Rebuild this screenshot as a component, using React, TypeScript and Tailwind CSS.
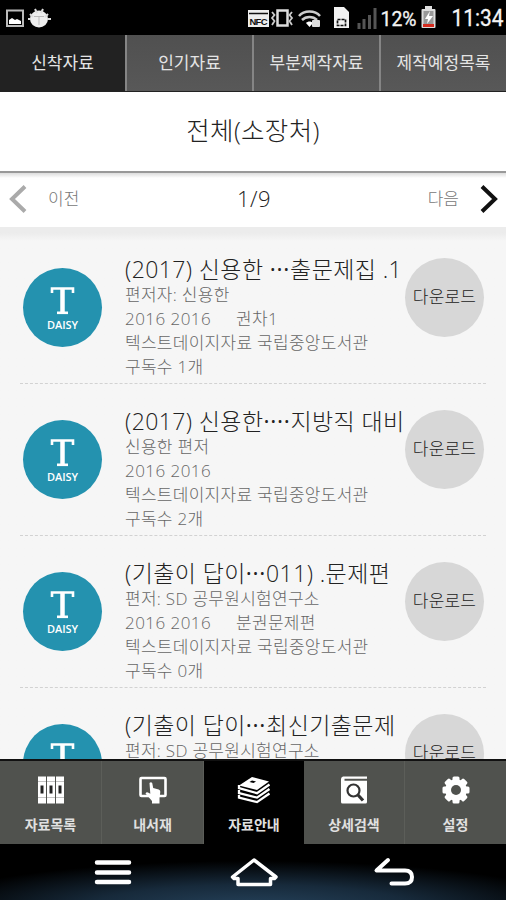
import type { ReactNode } from "react";

const FONT = "font-['Open_Sans','Noto_Sans_CJK_KR',sans-serif]";
const KFONT = "font-['Noto_Sans_CJK_KR',sans-serif]";

type Item = { title: ReactNode; author: string; year: string; vol?: string; count: number };

const dots = (n: number) => <span className="font-normal tracking-[0.700px]">{"·".repeat(n)}</span>;

const items: Item[] = [
  { title: <>(2017) 신용한 {dots(3)}출문제집 .1</>, author: "편저자: 신용한", year: "2016 2016", vol: "권차1", count: 1 },
  { title: <>(2017) 신용한{dots(4)}지방직 대비</>, author: "신용한 편저", year: "2016 2016", count: 2 },
  { title: <>(기출이 답이{dots(3)}011) .문제편</>, author: "편저: SD 공무원시험연구소", year: "2016 2016", vol: "분권문제편", count: 0 },
  { title: <>(기출이 답이{dots(3)}최신기출문제</>, author: "편저: SD 공무원시험연구소", year: "2016 2016", count: 0 },
];

function StatusBar() {
  return (
    <header className="h-[35px] shrink-0 bg-black">
      <svg width="506" height="35" viewBox="0 0 506 35" fill="none">
        <rect x="7" y="10.500" width="16" height="15.500" stroke="#bbb" strokeWidth="2" />
        <path d="M9 24v-4l3-2 3 2 2-1 4 2v3z" fill="#fff" />
        <ellipse cx="39" cy="19" rx="9" ry="8.500" fill="#eee" />
        <path d="M35 9l2 4M43 9l-2 4M28 19h3M48 19h3M30 14l3 3M48 14l-3 3" stroke="#ddd" strokeWidth="2" />
        <path d="M34 16.500h10M39 17v8" stroke="#bbb" strokeWidth="1" />
        <rect x="248" y="10" width="21" height="17" fill="#eee" />
        <path d="M249 13.500h19" stroke="#111" strokeWidth="1.500" />
        <text x="249.500" y="25" fontSize="9.500" fontWeight="900" fontFamily="Liberation Sans" fill="#111" textLength="18">NFC</text>
        <rect x="277.500" y="10.500" width="10" height="15" stroke="#ddd" strokeWidth="2.500" />
        <path d="M272 12l2.500 3-2.500 3 2.500 3-2.500 4M292 12l-2.500 3 2.500 3-2.500 3 2.500 4" stroke="#ccc" strokeWidth="1.800" />
        <path d="M299 16c5-6 16-6 21 0M302 20c4-4 11-4 15 0" stroke="#ccc" strokeWidth="2.500" />
        <path d="M306 23c2-2 5-2 7 0l-3.500 4z" fill="#fff" />
        <rect x="312" y="20" width="8" height="7" rx="1" fill="#ddd" />
        <path d="M334 7h10l5 5v16h-15z" fill="#f2f2f2" />
        <rect x="337.500" y="19.500" width="8" height="6" stroke="#111" strokeWidth="1.700" strokeDasharray="3 1" />
        <path d="M359 29v-6M364 29v-10M369.500 29v-14M375 29V8" stroke="#555" strokeWidth="3" />
        <text x="380.500" y="26" fontSize="20" fontFamily="Roboto" fill="#f4f4f4" stroke="#f4f4f4" strokeWidth="0.300" textLength="36" lengthAdjust="spacingAndGlyphs">12%</text>
        <rect x="421.500" y="9" width="14" height="19" rx="1" fill="#ddd" />
        <rect x="425" y="6" width="7" height="3" fill="#ddd" />
        <rect x="423.500" y="11" width="10" height="13" fill="#999" />
        <path d="M430 11l-5 8h3l-1 5 6-8h-4z" fill="#fff" />
        <rect x="423" y="24" width="11" height="3" fill="#d52b1e" />
        <text x="451.500" y="26" fontSize="23" fontFamily="Roboto" fill="#f4f4f4" stroke="#f4f4f4" strokeWidth="0.300" textLength="52" lengthAdjust="spacingAndGlyphs">11:34</text>
      </svg>
    </header>
  );
}

function TopTabs() {
  return (
    <nav className={`flex h-[57px] shrink-0 border-b border-[#222] text-[17px] leading-none text-[#e4e4e4] ${KFONT}`}>
      {["신착자료", "인기자료", "부분제작자료", "제작예정목록"].map((t, i) => (
        <div
          key={t}
          className={
            i === 0
              ? "flex w-[125px] items-center justify-center bg-[#222] pb-[3px]"
              : "flex flex-1 items-center justify-center border-l-2 border-[#858585] bg-linear-to-b from-[#505050] to-[#585858] pb-[3px]"
          }
        >
          {t}
        </div>
      ))}
    </nav>
  );
}

function Row({ item }: { item: Item }) {
  return (
    <li className="mx-5 flex h-[152px] shrink-0 border-b border-dashed border-[#d2d2d2]">
      <div className="mt-[36px] ml-[3px] flex size-[79px] shrink-0 flex-col items-center rounded-full bg-[#2492af] text-white">
        <svg width="25" height="29" viewBox="0 0 25 29" className="mt-[18px]" fill="none" stroke="#fff">
          <path d="M2 7V2.500h21V7" strokeWidth="2.600" />
          <path d="M12.500 2v25" strokeWidth="4.500" />
          <path d="M7 26.800h11" strokeWidth="2.600" />
        </svg>
        <span className="mt-[3px] font-['Open_Sans',sans-serif] text-[11px] leading-[14px] font-semibold">DAISY</span>
      </div>
      <div className="ml-[23px] w-[280px] shrink-0 pt-[25px] whitespace-nowrap">
        <h2 className={`h-[26px] text-[23px] leading-[25px] font-light tracking-[0.400px] text-[#222] ${FONT}`}>{item.title}</h2>
        <div className={`text-[17px] leading-[24px] font-light tracking-[0.280px] text-[#666] ${FONT}`}>
          <p>{item.author}</p>
          <p className="flex gap-[25px]">
            <span className="tracking-[0.450px]">{item.year}</span>
            <span>{item.vol}</span>
          </p>
          <p>텍스트데이지자료 국립중앙도서관</p>
          <p>구독수 {item.count}개</p>
        </div>
      </div>
      <button className={`mt-[26px] flex size-[79px] shrink-0 items-center justify-center rounded-full bg-[#d7d7d7] pb-[4px] text-[17px] leading-none font-light tracking-[0.200px] whitespace-nowrap text-[#222] ${KFONT}`}>
        다운로드
      </button>
    </li>
  );
}

const icons = [
  <svg key="a" width="28" height="28" viewBox="0 0 28 28">
    {[1, 10, 19].map((x) => (
      <g key={x}>
        <rect x={x} y="0.500" width="8" height="27" fill="#fff" />
        <path d={`M${x} 5.500h8M${x} 21.500h8`} stroke="#c4c4c4" />
        <rect x={x + 2.5} y="9.500" width="3" height="8" fill="#222" />
      </g>
    ))}
  </svg>,
  <svg key="b" width="28" height="28" viewBox="0 0 28 28">
    <rect x="1.500" y="2" width="25" height="18" rx="1" fill="none" stroke="#fff" strokeWidth="2.600" />
    <path d="M10.500 7q1.500-1.500 2.700 0l1 5 5.500 1.500q1.800.5 1.600 2.500L20.500 22v5.500h-7.500V25L6.500 17.500q1-2 3-.8l1.800 1z" fill="#fff" />
  </svg>,
  <svg key="c" width="34" height="28" viewBox="0 0 34 28">
    <path d="M2 9.500L15 1l17 4.500L20 14z" fill="#fff" />
    <path d="M15 4.500l4 1-2.500 1.500-4-1z" fill="#000" />
    <path d="M2 9v3.200l18 5 12.500-8.700M2 14v3l18 4.600 12.500-8.600M2 19v2.500l18 4.600 12.500-8.600" fill="none" stroke="#fff" strokeWidth="2.300" />
  </svg>,
  <svg key="d" width="28" height="28" viewBox="0 0 28 28">
    <path d="M3 .5h24v2.200H4.500v2H27V26q0 1.500-1.500 1.500h-23Q1 27.500 1 26V3Q1 1 3 .5z" fill="#fff" />
    <circle cx="13.500" cy="14.500" r="6" fill="none" stroke="#333" strokeWidth="2.200" />
    <path d="M18 19l5 5.500" stroke="#333" strokeWidth="3.200" />
  </svg>,
  <svg key="e" width="28" height="28" viewBox="0 0 28 28">
    <g fill="#fff">
      {[0, 45, 90, 135].map((a) => (
        <rect key={a} x="10.500" y="0.500" width="7" height="27" rx="1.500" transform={`rotate(${a} 14 14)`} />
      ))}
      <circle cx="14" cy="14" r="10.800" />
    </g>
    <circle cx="14" cy="14" r="5" fill="#50524e" />
  </svg>,
];

function BottomTabs() {
  return (
    <nav className={`grid h-[85px] shrink-0 grid-cols-[102px_102px_100px_101px_101px] border-t-2 border-[#111] text-[14px] leading-none font-bold text-[#e0e0e0] ${KFONT}`}>
      {["자료목록", "내서재", "자료안내", "상세검색", "설정"].map((t, i) => (
        <div
          key={t}
          className={`flex flex-col items-center pt-[15px] ${i === 2 ? "bg-black" : i === 4 ? "bg-[#50524e]" : "border-r border-[#5c5e59] bg-[#50524e]"}`}
        >
          {icons[i]}
          <span className="mt-[10px] leading-[20px]">{t}</span>
        </div>
      ))}
    </nav>
  );
}

function SystemNav() {
  return (
    <footer className="h-[56px] shrink-0 bg-[radial-gradient(ellipse_65%_85%_at_50%_115%,#26435c_0%,#172a3b_50%,#000_100%)]">
      <svg width="506" height="56" viewBox="0 0 506 56" fill="none" stroke="#fff">
        <path d="M97 18.500h32M97 28.500h32M97 38h32" strokeWidth="4.500" strokeLinecap="round" />
        <path d="M254 16L232.500 33l1.500 1.500h4v6h32.500v-6h4l1.500-1.500z" strokeWidth="3.500" strokeLinejoin="round" />
        <path d="M388 16l-11.500 10.500H405q7 0 7 6.500t-7 6.500h-13.500" strokeWidth="4" strokeLinecap="round" strokeLinejoin="round" />
      </svg>
    </footer>
  );
}

export default function App() {
  return (
    <div className="flex h-[900px] w-[506px] flex-col overflow-hidden bg-[#f6f6f6]">
      <StatusBar />
      <TopTabs />
      <h1 className={`flex h-[79px] shrink-0 items-center justify-center bg-white pb-px text-[25.500px] leading-none text-[#222] ${FONT}`}>
        <span className="font-light tracking-[0.300px]">전체(소장처)</span>
      </h1>
      <div className="h-[56px] shrink-0 border-t-2 border-[#999] bg-white">
        <div className={`flex h-full items-center bg-linear-to-b from-[#ddd] to-white to-[5px] pr-[8px] pb-[3px] pl-[9px] font-light text-[#777] ${FONT}`}>
          <svg width="18" height="28" viewBox="0 0 18 28" fill="none">
            <path d="M16 1.500L3 14l13 12.500" stroke="#aaa" strokeWidth="4" />
          </svg>
          <span className="ml-[21px] w-[120px] text-[17px]">이전</span>
          <span className="flex-1 pl-[69px] text-[22px] tracking-[0.500px] text-[#222]">1/9</span>
          <span className="mr-[21px] text-[17px]">다음</span>
          <svg width="18" height="28" viewBox="0 0 18 28" fill="none">
            <path d="M2 1.500L15 14 2 26.500" stroke="#111" strokeWidth="4" />
          </svg>
        </div>
      </div>
      <ul className="flex min-h-0 flex-1 flex-col overflow-hidden bg-linear-to-b from-[#ececec] from-[6px] to-[#f6f6f6] to-[14px] pt-[5px]">
        {items.map((item, i) => (
          <Row key={i} item={item} />
        ))}
      </ul>
      <BottomTabs />
      <SystemNav />
    </div>
  );
}
